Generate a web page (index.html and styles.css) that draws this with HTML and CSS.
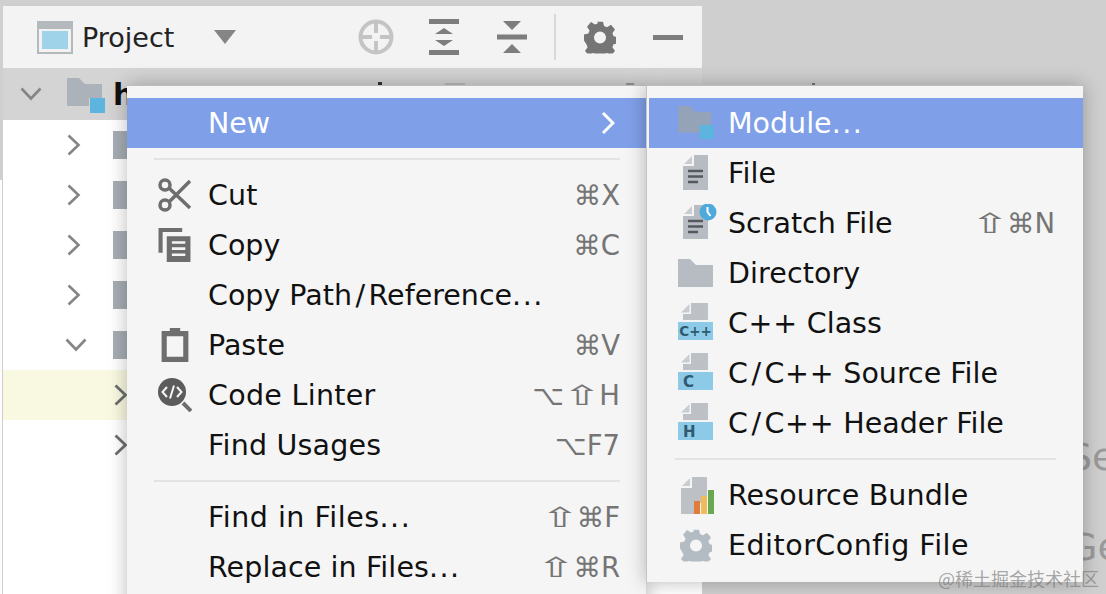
FILE: index.html
```html
<!DOCTYPE html>
<html lang="en">
<head>
<meta charset="utf-8">
<title>Project menu</title>
<link rel="stylesheet" href="styles.css">
</head>
<body>
<svg class="defs" width="0" height="0" aria-hidden="true">
  <defs>
    <symbol id="gear" viewBox="0 0 32 32"><path fill-rule="evenodd" d="M13 0h6l1 4.500 3 1.300 4-2.500 4 4.600-2.600 3.800 1.200 3v0l4.400 1v6l-4.400 1-1.200 3 2.600 3.800-4 4.600-4-2.500-3 1.300-1 3.300h-6l-1-3.300-3-1.300-4 2.500-4-4.600 2.600-3.800-1.200-3L0 19v-6l4.400-1 1.200-3L3 5.200l4-4.600 4 2.500 3-1.300ZM16 10a6 6 0 1 0 0 12 6 6 0 0 0 0-12Z"/></symbol>
  </defs>
</svg>
<div class="stage">
  <div class="panel">
    <header class="toolbar">
      <svg class="tb-window" viewBox="0 0 36 33"><rect width="36" height="33" fill="#b4b9bd"/><rect x="2" y="8" width="32" height="23" fill="#f2f2f2"/><rect x="5" y="10" width="26" height="18" fill="#9fd3ea"/></svg>
      <span class="tb-title">Project</span>
      <svg class="tb-caret" viewBox="0 0 22 14"><path d="M0 0H22L11 14Z" fill="#858585"/></svg>
      <svg class="tb-target" viewBox="0 0 36 36"><circle cx="18" cy="18" r="15.500" fill="none" stroke="#c4c4c4" stroke-width="4"/><path d="M18 4v10M18 22v10M4 18h10M22 18h10" stroke="#c4c4c4" stroke-width="4"/></svg>
      <svg class="tb-icon" viewBox="0 0 30 36"><path d="M0 0h30v5H0ZM0 31h30v5H0ZM15 9l9 6H6ZM15 27l-9-6h18Z" fill="#7d7d7d"/></svg>
      <svg class="tb-icon" viewBox="0 0 30 32"><path d="M0 13.500h30v5H0ZM6 0h18l-9 9ZM15 23l9 9H6Z" fill="#7d7d7d"/></svg>
      <span class="tb-sep"></span>
      <svg class="tb-gear" viewBox="0 0 32 32"><use href="#gear" fill="#757575"/></svg>
      <span class="tb-min"></span>
    </header>
    <div class="tree">
      <div class="tree-row root">
        <svg class="chev down" viewBox="0 0 22 14"><path d="M1.500 1.500 11 11.500 20.500 1.500" fill="none" stroke="#858585" stroke-width="2.600"/></svg>
        <svg class="root-folder" viewBox="0 0 38 36"><path d="M0 0H12L18 6H35V28H0Z" fill="#abb2b9"/><rect x="22" y="20" width="16" height="16" fill="#d4d4d4"/><rect x="23" y="20" width="15" height="15" fill="#5db4de"/></svg>
        <span class="root-name">h</span>
      </div>
      <div class="tree-row"><svg class="chev right" viewBox="0 0 14 22"><path d="M1.500 1.500 11.500 11 1.500 20.500" fill="none" stroke="#858585" stroke-width="2.600"/></svg><span class="tree-folder"></span></div>
      <div class="tree-row"><svg class="chev right" viewBox="0 0 14 22"><path d="M1.500 1.500 11.500 11 1.500 20.500" fill="none" stroke="#858585" stroke-width="2.600"/></svg><span class="tree-folder"></span></div>
      <div class="tree-row"><svg class="chev right" viewBox="0 0 14 22"><path d="M1.500 1.500 11.500 11 1.500 20.500" fill="none" stroke="#858585" stroke-width="2.600"/></svg><span class="tree-folder"></span></div>
      <div class="tree-row"><svg class="chev right" viewBox="0 0 14 22"><path d="M1.500 1.500 11.500 11 1.500 20.500" fill="none" stroke="#858585" stroke-width="2.600"/></svg><span class="tree-folder"></span></div>
      <div class="tree-row"><svg class="chev down" viewBox="0 0 22 14"><path d="M1.500 1.500 11 11.500 20.500 1.500" fill="none" stroke="#858585" stroke-width="2.600"/></svg><span class="tree-folder"></span></div>
      <div class="tree-row sub marked"><svg class="chev right" viewBox="0 0 14 22"><path d="M1.500 1.500 11.500 11 1.500 20.500" fill="none" stroke="#6e6e6e" stroke-width="2.800"/></svg></div>
      <div class="tree-row sub"><svg class="chev right" viewBox="0 0 14 22"><path d="M1.500 1.500 11.500 11 1.500 20.500" fill="none" stroke="#6e6e6e" stroke-width="2.800"/></svg></div>
    </div>
  </div>

  <span class="bg-letter se">Se</span>
  <span class="bg-letter ge">Ge</span>

  <span class="tick t1"></span>
  <span class="tick t2"></span>
  <span class="tick t3"></span>
  <span class="tick t4"></span>

  <nav class="menu main-menu">
    <div class="item active"><span class="slot"></span><span class="label">New</span><svg class="arrow" viewBox="0 0 14 24"><path d="M2 2 12 12 2 22" fill="none" stroke="#fff" stroke-width="3"/></svg></div>
    <div class="sep"></div>
    <div class="item"><span class="slot">
      <svg class="ic" viewBox="0 0 34 34"><g fill="none" stroke="#6e6e6e" stroke-width="3.500"><circle cx="7" cy="7" r="5"/><circle cx="7" cy="27" r="5"/><path d="M11 10 32 30M11 24 32 3"/></g></svg>
    </span><span class="label loose-sm">Cut</span><span class="keys">⌘X</span></div>
    <div class="item"><span class="slot">
      <svg class="ic" viewBox="0 0 32 33"><path d="M0 0H23V4H4V24H0Z" fill="#6e6e6e"/><path d="M8 8H31V33H8Z" fill="#6e6e6e"/><path d="M13 14H26M13 20H26M13 26H26" stroke="#f5f5f5" stroke-width="2.500"/></svg>
    </span><span class="label">Copy</span><span class="keys">⌘C</span></div>
    <div class="item"><span class="slot"></span><span class="label">Copy Path<span class="slash">/</span>Reference<span class="dots">...</span></span></div>
    <div class="item"><span class="slot">
      <svg class="ic" viewBox="0 0 26 33"><path fill-rule="evenodd" d="M8 0H18V3H26V33H0V3H8ZM5 8V28H21V8Z" fill="#6e6e6e"/></svg>
    </span><span class="label">Paste</span><span class="keys">⌘V</span></div>
    <div class="item"><span class="slot">
      <svg class="ic" viewBox="0 0 34 34"><circle cx="14" cy="14" r="14" fill="#5c5c5c"/><path d="M25 25 33 33" stroke="#6e6e6e" stroke-width="4"/><path d="M9 9 4.500 14 9 19M19 9 23.500 14 19 19M16 7.500 12 20.500" fill="none" stroke="#f5f5f5" stroke-width="2"/></svg>
    </span><span class="label loose-md">Code Linter</span><span class="keys">⌥<span class="shift">⇧</span>H</span></div>
    <div class="item"><span class="slot"></span><span class="label loose-sm">Find Usages</span><span class="keys">⌥F7</span></div>
    <div class="sep"></div>
    <div class="item"><span class="slot"></span><span class="label"><span class="loose">Find in Files</span><span class="dots">...</span></span><span class="keys"><span class="shift">⇧</span>⌘F</span></div>
    <div class="item"><span class="slot"></span><span class="label"><span class="loose-xs">Replace in Files</span><span class="dots">...</span></span><span class="keys"><span class="shift">⇧</span>⌘R</span></div>
  </nav>

  <nav class="menu sub-menu">
    <div class="item active"><span class="slot">
      <svg class="ic folder" viewBox="0 0 38 36"><path d="M0 0H12L18 6H35V28H0Z" fill="#95a3b8"/><rect x="23" y="20" width="15" height="15" fill="#5db4de"/></svg>
    </span><span class="label">Module<span class="dots">...</span></span></div>
    <div class="item"><span class="slot">
      <svg class="ic doc" viewBox="0 0 26 36"><path d="M11 0H25V35H0V11H11Z" fill="#b6bcc2"/><path d="M9 1V9H1Z" fill="#c9cdd1"/><path d="M5 16H20M5 21.500H20M5 27H15" stroke="#55595d" stroke-width="2.500"/></svg>
    </span><span class="label loose-xs">File</span></div>
    <div class="item"><span class="slot">
      <svg class="ic doc-clock" viewBox="0 0 34 37"><path d="M11 1H25V35H0V12H11Z" fill="#b6bcc2"/><path d="M9 2V10H1Z" fill="#c9cdd1"/><path d="M5 17H20M5 22.500H20M5 28H15" stroke="#55595d" stroke-width="2.500"/><circle cx="25" cy="8" r="8.500" fill="#4eaadb"/><path d="M24.500 3V8L27.500 12" fill="none" stroke="#fff" stroke-width="2"/></svg>
    </span><span class="label">Scratch File</span><span class="keys"><span class="shift">⇧</span>⌘N</span></div>
    <div class="item"><span class="slot">
      <svg class="ic folder" viewBox="0 0 36 28"><path d="M0 0H12L18 6H35V28H0Z" fill="#b6bcc2"/></svg>
    </span><span class="label loose-xs">Directory</span></div>
    <div class="item"><span class="slot">
      <svg class="ic lang" viewBox="0 0 36 38"><path d="M13 0H30V17H5V11H13Z" fill="#bdc1c5"/><path d="M11.500 1V9.500H3Z" fill="#c9cdd1"/><rect y="19" width="35" height="18" fill="#8dcae7"/><text class="lang-text small" x="17.500" y="33">C++</text></svg>
    </span><span class="label"><span class="plus">C++</span> Class</span></div>
    <div class="item"><span class="slot">
      <svg class="ic lang" viewBox="0 0 36 38"><path d="M13 0H30V17H5V11H13Z" fill="#bdc1c5"/><path d="M11.500 1V9.500H3Z" fill="#c9cdd1"/><rect y="19" width="35" height="18" fill="#8dcae7"/><text class="lang-text" x="5" y="33.500">C</text></svg>
    </span><span class="label">C<span class="slash">/</span><span class="plus">C++</span> Source File</span></div>
    <div class="item"><span class="slot">
      <svg class="ic lang" viewBox="0 0 36 38"><path d="M13 0H30V17H5V11H13Z" fill="#bdc1c5"/><path d="M11.500 1V9.500H3Z" fill="#c9cdd1"/><rect y="19" width="35" height="18" fill="#8dcae7"/><text class="lang-text" x="5" y="34">H</text></svg>
    </span><span class="label">C<span class="slash">/</span><span class="plus">C++</span> Header File</span></div>
    <div class="sep"></div>
    <div class="item"><span class="slot">
      <svg class="ic bundle" viewBox="0 0 34 37"><path d="M11 0H26V26H13V37H0V11H11Z" fill="#bdc1c5"/><path d="M9 1V9H1Z" fill="#c9cdd1"/><rect x="13" y="24" width="6" height="13" fill="#e07b3c"/><rect x="20" y="19" width="6" height="18" fill="#efbc5c"/><rect x="27" y="13" width="6" height="24" fill="#6aa84f"/></svg>
    </span><span class="label loose-xs">Resource Bundle</span></div>
    <div class="item"><span class="slot">
      <svg class="ic gear" viewBox="0 0 32 32"><use href="#gear" fill="#b4bcc3"/></svg>
    </span><span class="label loose">EditorConfig File</span></div>
  </nav>

  <span class="watermark">@稀土掘金技术社区</span>
</div>
</body>
</html>
```

FILE: styles.css
```css
* { box-sizing: border-box; }
html, body { margin: 0; padding: 0; }
body { width: 1106px; height: 594px; overflow: hidden; background: #cfcfcf; font-family: "DejaVu Sans", "Liberation Sans", sans-serif; }
.defs { position: absolute; }
.stage { position: relative; width: 1106px; height: 594px; overflow: hidden; padding: 6px 0 0 3px; }
.stage::before { content: ""; position: absolute; left: 0; top: 180px; width: 2px; height: 414px; background: #fdfdfd; }

.panel { width: 699px; height: 588px; background: #fff; display: flex; flex-direction: column; }
.toolbar { height: 62px; background: #f3f3f3; display: flex; align-items: center; padding-left: 34px; flex: none; }
.tb-window { width: 36px; height: 33px; }
.tb-title { font-size: 27px; color: #222; margin-left: 9px; width: 132px; }
.tb-caret { width: 22px; height: 14px; margin-right: 122px; }
.tb-target { width: 36px; height: 36px; }
.tb-icon { width: 30px; height: 36px; margin-left: 35px; }
.tb-icon + .tb-icon { margin-left: 38px; }
.tb-sep { width: 2px; height: 46px; background: #d8d8d8; margin-left: 27px; }
.tb-gear { width: 32px; height: 33px; margin-left: 28px; }
.tb-min { width: 30px; height: 5px; background: #7d7d7d; margin-left: 37px; }

.tree { flex: 1; display: flex; flex-direction: column; }
.tree-row { height: 50px; display: flex; align-items: center; padding-left: 64px; gap: 32px; flex: none; }
.tree-row.root { height: 52px; background: #d4d4d4; padding-left: 17px; gap: 25px; }
.tree-row.sub { padding-left: 111px; }
.tree-row.marked { background: #f9f9e1; }
.chev.right { width: 14px; height: 22px; }
.chev.down { width: 22px; height: 14px; }
.tree-row:not(.root) .chev.down { margin-left: -2px; margin-right: -6px; }
.root-folder { width: 38px; height: 36px; margin-top: 4px; }
.root-name { font-size: 30px; font-weight: 700; color: #111; margin-left: -17px; white-space: nowrap; }
.tree-folder { width: 28px; height: 28px; background: #a6adb4; }

.bg-letter { position: absolute; left: 1068px; font-size: 38px; color: #9a9a9a; line-height: 1; white-space: nowrap; }
.bg-letter.se { top: 438px; }
.bg-letter.ge { top: 528px; }

.tick { position: absolute; top: 82px; height: 4px; background: #777; }
.t1 { left: 378px; width: 4px; background: #333; }
.t2 { left: 445px; width: 20px; height: 3px; top: 83px; background: #bbb; }
.t3 { left: 626px; width: 8px; height: 3px; top: 83px; background: #999; }
.t4 { left: 812px; width: 3px; height: 3px; top: 83px; }

.menu { position: absolute; background: #f5f5f5; padding: 12px 0; display: flex; flex-direction: column; box-shadow: 0 0 18px rgba(0,0,0,.28); border-top: 1px solid #bdbdbd; }
.main-menu { left: 127px; top: 85px; width: 519px; height: 530px; }
.sub-menu { left: 646px; top: 85px; width: 437px; height: 497px; padding-left: 2px; border-left: 1px solid #c4c4c4; }
.item { height: 50px; flex: none; display: flex; align-items: center; font-size: 28.500px; color: #111; }
.item.active { background: #7f9fe8; color: #fff; }
.slot { flex: none; display: flex; align-items: center; justify-content: center; }
.main-menu .slot { width: 80px; padding-left: 14px; margin-left: 1px; }
.sub-menu .slot { width: 79px; padding-left: 15px; }
.label { white-space: nowrap; padding-top: 1px; }
.slash { padding: 0 3.500px; }
.plus { letter-spacing: .7px; }
.dots { letter-spacing: 1.500px; }
.loose { letter-spacing: .5px; }
.loose-md { letter-spacing: .3px; }
.loose-sm { letter-spacing: .2px; }
.loose-xs { letter-spacing: .1px; }
.keys { margin-left: auto; color: #757575; font-size: 27.500px; white-space: nowrap; }
.main-menu .keys { margin-right: 26px; }
.sub-menu .keys { margin-right: 28px; }
.shift { display: inline-block; transform: scaleX(1.700); margin: 0 6px; }
.arrow { width: 14px; height: 24px; margin-left: auto; margin-right: 31px; }
.sep { height: 22px; flex: none; display: flex; align-items: center; }
.sep::after { content: ""; display: block; height: 2px; background: #e3e3e3; width: 100%; }
.main-menu .sep { padding: 0 26px 0 27px; }
.sub-menu .sep { padding: 0 27px 0 26px; }
.ic { width: 34px; height: 34px; display: block; }
.ic.doc { width: 26px; height: 36px; }
.ic.doc-clock { width: 34px; height: 37px; margin-left: 8px; margin-top: -2px; }
.ic.folder { width: 36px; height: 34px; }
.ic.lang { width: 36px; height: 38px; margin-top: -2px; }
.ic.bundle { width: 34px; height: 37px; margin-left: 4px; }
.ic.gear { width: 32px; height: 33px; }
.lang-text { font-size: 15px; font-weight: 700; fill: #2f5a70; font-family: "DejaVu Sans", sans-serif; }
.lang-text.small { font-size: 13.500px; text-anchor: middle; }

.watermark { position: absolute; right: 7px; bottom: 7px; font-size: 18px; color: rgba(120,120,120,.65); font-family: "Noto Sans CJK SC", sans-serif; line-height: 1; white-space: nowrap; }
```
